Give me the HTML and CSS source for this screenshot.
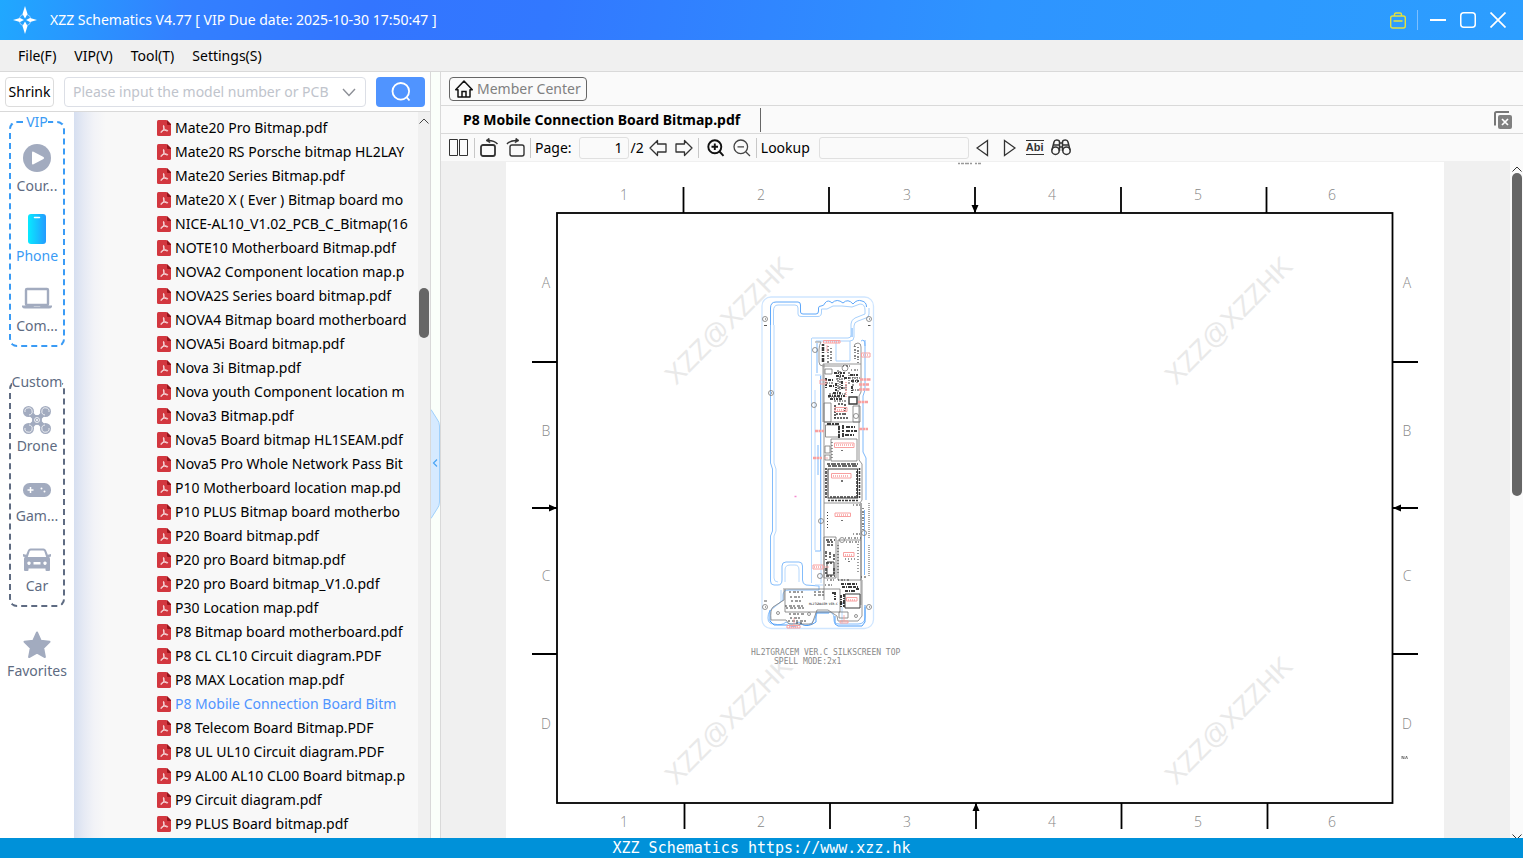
FILE: index.html
```html
<!DOCTYPE html>
<html lang="en">
<head>
<meta charset="utf-8">
<title>XZZ Schematics</title>
<link rel="stylesheet" href="styles.css">
</head>
<body>
<svg class="defs" aria-hidden="true">
  <symbol id="pdf" viewBox="0 0 14 16">
    <path d="M1.5 0H9.500L14 4.500V14.500Q14 16 12.500 16H1.500Q0 16 0 14.500V1.500Q0 0 1.500 0Z" fill="#d2373f"/>
    <path d="M10 0L14 4V5H11Q10 5 10 4Z" fill="#96141c"/>
    <path d="M6.500 5.500C7.600 5.500 6.900 8.500 6.200 10C5.600 11.300 4.400 12.800 3.800 12.300C3.300 11.500 6 10.300 8 10.100C9.500 9.900 11 10.200 10.700 10.900C10.200 11.600 8 10.300 7.300 8.900C6.700 7.700 6 5.700 6.500 5.500Z" fill="none" stroke="#fff" stroke-width="0.800"/>
  </symbol>
</svg>
<div class="app">
  <header class="titlebar">
    <svg class="logo" width="24" height="28" viewBox="0 0 24 28">
      <circle cx="12" cy="14" r="6" fill="none" stroke="#9fd0ff" stroke-width="1" stroke-dasharray="7 2.420" stroke-dashoffset="-1"/>
      <path d="M12 0L14.500 8L12 12.500L9.500 8ZM12 28L9.500 20L12 15.500L14.500 20ZM0 14L7 12L11 14L7 16ZM24 14L17 12L13 14L17 16Z" fill="#fff"/>
    </svg>
    <h1 class="title">XZZ Schematics V4.77 [ VIP Due date: 2025-10-30 17:50:47 ]</h1>
    <div class="window-buttons">
      <button aria-label="Toolbox"><svg width="16" height="17" viewBox="0 0 16 17" fill="none" stroke="#e4e23c" stroke-width="1.400"><rect x="0.700" y="4" width="14.600" height="12" rx="2"/><path d="M4.500 4V2.500Q4.500 1 6 1H10Q11.500 1 11.500 2.500V4M3.500 9H12.500"/></svg></button>
      <span class="divider"></span>
      <button aria-label="Minimize"><svg width="16" height="16" viewBox="0 0 16 16" stroke="#fff" stroke-width="2"><path d="M0 8H16"/></svg></button>
      <button aria-label="Maximize"><svg width="16" height="16" viewBox="0 0 16 16" fill="none" stroke="#fff" stroke-width="1.500"><rect x="0.750" y="0.750" width="14.500" height="14.500" rx="3"/></svg></button>
      <button aria-label="Close"><svg width="16" height="16" viewBox="0 0 16 16" stroke="#fff" stroke-width="1.700"><path d="M0.500 0.500L15.500 15.500M15.500 0.500L0.500 15.500"/></svg></button>
    </div>
  </header>
  <nav class="menubar">
    <button>File(F)</button><button>VIP(V)</button><button>Tool(T)</button><button>Settings(S)</button>
  </nav>
  <main class="workspace">
    <section class="browser">
      <form class="search">
        <button type="button" class="shrink">Shrink</button>
        <div class="combo">
          <input type="text" aria-label="Model number" placeholder="Please input the model number or PCB">
          <button type="button" aria-label="Show history"><svg width="14" height="9" viewBox="0 0 14 9" fill="none" stroke="#8c8f96" stroke-width="1.400"><path d="M1 1L7 7.500L13 1"/></svg></button>
        </div>
        <button type="button" class="go" aria-label="Search"><svg width="20" height="20" viewBox="0 0 20 20" fill="none" stroke="#fff" stroke-width="1.800"><circle cx="9.800" cy="9.300" r="8.300"/><path d="M15.500 15.200L18.500 18.500"/></svg></button>
      </form>
      <div class="browser-body">
        <nav class="categories">
          <fieldset class="group vip">
            <legend>VIP</legend>
            <div class="items">
              <button class="item"><svg width="28" height="28" viewBox="0 0 28 28"><circle cx="14" cy="14" r="14" fill="#a2abbf"/><path d="M9 8.500Q9 7 10.500 7.700L20.500 13Q21.800 14 20.500 15L10.500 20.300Q9 21 9 19.500Z" fill="#fff"/></svg><span>Cour...</span></button>
              <button class="item active"><svg width="28" height="30" viewBox="0 0 28 30"><defs><linearGradient id="phone-fill"><stop offset="0" stop-color="#08eaff"/><stop offset="1" stop-color="#249bff"/></linearGradient></defs><rect x="5" y="0" width="18" height="30" rx="3" fill="url(#phone-fill)"/><path d="M11.500 3.500H16.500" stroke="#fff" stroke-width="1.500" stroke-linecap="round"/></svg><span>Phone</span></button>
              <button class="item"><svg width="30" height="28" viewBox="0 0 30 28"><rect x="4" y="5" width="22" height="16" rx="1" fill="none" stroke="#a2abbf" stroke-width="2.400"/><path d="M0 21.500H11L12 22.500H18L19 21.500H30V23Q29 24.500 27 24.500H3Q1 24.500 0 23Z" fill="#a2abbf"/></svg><span>Com...</span></button>
            </div>
          </fieldset>
          <fieldset class="group custom">
            <legend>Custom</legend>
            <div class="items">
              <button class="item"><svg width="28" height="28" viewBox="0 0 28 28"><path d="M6 6L14 14L22 6M6 22L14 14L22 22" stroke="#a2abbf" stroke-width="5" fill="none"/><g fill="#a2abbf"><circle cx="5.500" cy="5.500" r="5.500"/><circle cx="22.500" cy="5.500" r="5.500"/><circle cx="5.500" cy="22.500" r="5.500"/><circle cx="22.500" cy="22.500" r="5.500"/><circle cx="14" cy="14" r="5"/></g><g fill="none" stroke="#fff" stroke-width="0.800"><path d="M2 6A3.600 3.600 0 1 1 6 9M26 6A3.600 3.600 0 1 0 22 9M2 22A3.600 3.600 0 1 0 6 19M26 22A3.600 3.600 0 1 1 22 19"/><circle cx="14" cy="14" r="2.500"/></g><circle cx="14" cy="14" r="1" fill="#fff"/></svg><span>Drone</span></button>
              <button class="item"><svg width="28" height="28" viewBox="0 0 28 28"><rect x="0" y="7" width="28" height="14" rx="6.500" fill="#a2abbf"/><path d="M4.500 14H10.500M7.500 11V17" stroke="#fff" stroke-width="1.500"/><circle cx="18.500" cy="12.500" r="1" fill="#fff"/><circle cx="21.500" cy="15.500" r="1" fill="#fff"/></svg><span>Gam...</span></button>
              <button class="item"><svg width="28" height="28" viewBox="0 0 28 28"><path fill-rule="evenodd" fill="#a2abbf" d="M7.500 2.500H20.500Q22.300 2.500 23 4.200L24.800 8.700L28 8V10.500L26.300 11Q27 12 27 13V24Q27 25 26 25H23.500Q22.500 25 22.500 24V22.500H5.500V24Q5.500 25 4.500 25H2Q1 25 1 24V13Q1 12 1.700 11L0 10.500V8L3.200 8.700L5 4.200Q5.700 2.500 7.500 2.500ZM8 4.500Q7 4.500 6.700 5.300L4.800 11H23.200L21.300 5.300Q21 4.500 20 4.500ZM6 15.500A1.700 1.700 0 1 0 6.010 15.500ZM22 15.500A1.700 1.700 0 1 0 22.010 15.500ZM10.500 16V18.500H17.500V16Z"/></svg><span>Car</span></button>
            </div>
          </fieldset>
          <button class="item favorites"><svg width="28" height="28" viewBox="0 0 28 28"><path d="M14 1.500L17.800 9.800L26.500 10.800L20.200 17L21.900 26L14 21.700L6.100 26L7.800 17L1.500 10.800L10.200 9.800Z" fill="#a2abbf" stroke="#a2abbf" stroke-width="2" stroke-linejoin="round"/></svg><span>Favorites</span></button>
        </nav>
        <ul class="files">
          <li><a href="#"><svg><use href="#pdf"/></svg>Mate20 Pro Bitmap.pdf</a></li>
          <li><a href="#"><svg><use href="#pdf"/></svg>Mate20 RS Porsche bitmap HL2LAY</a></li>
          <li><a href="#"><svg><use href="#pdf"/></svg>Mate20 Series Bitmap.pdf</a></li>
          <li><a href="#"><svg><use href="#pdf"/></svg>Mate20 X ( Ever ) Bitmap board mo</a></li>
          <li><a href="#"><svg><use href="#pdf"/></svg>NICE-AL10_V1.02_PCB_C_Bitmap(16</a></li>
          <li><a href="#"><svg><use href="#pdf"/></svg>NOTE10 Motherboard Bitmap.pdf</a></li>
          <li><a href="#"><svg><use href="#pdf"/></svg>NOVA2 Component location map.p</a></li>
          <li><a href="#"><svg><use href="#pdf"/></svg>NOVA2S Series board bitmap.pdf</a></li>
          <li><a href="#"><svg><use href="#pdf"/></svg>NOVA4 Bitmap board motherboard</a></li>
          <li><a href="#"><svg><use href="#pdf"/></svg>NOVA5i Board bitmap.pdf</a></li>
          <li><a href="#"><svg><use href="#pdf"/></svg>Nova 3i Bitmap.pdf</a></li>
          <li><a href="#"><svg><use href="#pdf"/></svg>Nova youth Component location m</a></li>
          <li><a href="#"><svg><use href="#pdf"/></svg>Nova3 Bitmap.pdf</a></li>
          <li><a href="#"><svg><use href="#pdf"/></svg>Nova5 Board bitmap HL1SEAM.pdf</a></li>
          <li><a href="#"><svg><use href="#pdf"/></svg>Nova5 Pro Whole Network Pass Bit</a></li>
          <li><a href="#"><svg><use href="#pdf"/></svg>P10 Motherboard location map.pd</a></li>
          <li><a href="#"><svg><use href="#pdf"/></svg>P10 PLUS Bitmap board motherbo</a></li>
          <li><a href="#"><svg><use href="#pdf"/></svg>P20 Board bitmap.pdf</a></li>
          <li><a href="#"><svg><use href="#pdf"/></svg>P20 pro Board bitmap.pdf</a></li>
          <li><a href="#"><svg><use href="#pdf"/></svg>P20 pro Board bitmap_V1.0.pdf</a></li>
          <li><a href="#"><svg><use href="#pdf"/></svg>P30 Location map.pdf</a></li>
          <li><a href="#"><svg><use href="#pdf"/></svg>P8 Bitmap board motherboard.pdf</a></li>
          <li><a href="#"><svg><use href="#pdf"/></svg>P8 CL CL10 Circuit diagram.PDF</a></li>
          <li><a href="#"><svg><use href="#pdf"/></svg>P8 MAX Location map.pdf</a></li>
          <li><a href="#" class="current"><svg><use href="#pdf"/></svg>P8 Mobile Connection Board Bitm</a></li>
          <li><a href="#"><svg><use href="#pdf"/></svg>P8 Telecom Board Bitmap.PDF</a></li>
          <li><a href="#"><svg><use href="#pdf"/></svg>P8 UL UL10 Circuit diagram.PDF</a></li>
          <li><a href="#"><svg><use href="#pdf"/></svg>P9 AL00 AL10 CL00 Board bitmap.p</a></li>
          <li><a href="#"><svg><use href="#pdf"/></svg>P9 Circuit diagram.pdf</a></li>
          <li><a href="#"><svg><use href="#pdf"/></svg>P9 PLUS Board bitmap.pdf</a></li>
        </ul>
        <div class="scroll list-scroll">
          <svg width="10" height="6" viewBox="0 0 10 6" fill="none" stroke="#444"><path d="M0.500 5.500L5 1L9.500 5.500"/></svg>
          <span class="thumb"></span>
        </div>
      </div>
    </section>
    <div class="splitter">
      <button aria-label="Collapse panel"><svg width="9" height="110" viewBox="0 0 9 110"><path d="M0 0.500L6 10Q8.500 13 8.500 17V93Q8.500 97 6 100L0 109.500" fill="#d6eaff" stroke="#9fd0fb"/><path d="M6 50.500L2.500 54L6 57.500" fill="none" stroke="#4aa5f5" stroke-width="1.200"/></svg></button>
    </div>
    <section class="document">
      <div class="memberbar">
        <button class="member"><svg width="18" height="18" viewBox="0 0 18 18" fill="none" stroke="#111" stroke-width="1.500"><path d="M0.700 9.700L9 1L17.300 9.700H15V17H3V9.700Z" stroke-linejoin="round"/><path d="M7 17V11.500H11V17"/></svg>Member Center</button>
      </div>
      <div class="tabs">
        <button class="tab">P8 Mobile Connection Board Bitmap.pdf</button>
        <button class="close-all" aria-label="Close all tabs"><svg width="18" height="18" viewBox="0 0 18 18"><path d="M1 14.500V2.500Q1 1 2.500 1H15" fill="none" stroke="#777" stroke-width="2"/><rect x="4" y="4" width="14" height="14" rx="2" fill="#808080"/><path d="M8 8L14 14M14 8L8 14" stroke="#fff" stroke-width="1.700"/></svg></button>
      </div>
      <div class="toolbar">
        <button aria-label="Two pages"><svg width="20" height="18" viewBox="0 0 20 18" fill="none" stroke="#333"><path d="M0.500 0.500H8.500V16.500H0.500ZM10.500 0.500H18.500V16.500H10.500Z"/></svg></button>
        <span class="sep"></span>
        <button aria-label="Rotate left"><svg width="19" height="19" viewBox="0 0 19 19" fill="none" stroke="#333"><rect x="1" y="7" width="14" height="11" rx="2" stroke-width="1.800"/><path d="M17.500 6Q14 2 6.500 2.500" stroke-width="1.500"/><path d="M9 0L6 2.500L10 5Z" fill="#333" stroke-width="0.500"/></svg></button>
        <button class="rotate-right" aria-label="Rotate right"><svg width="19" height="19" viewBox="0 0 19 19" fill="none" stroke="#333"><rect x="4" y="7" width="14" height="11" rx="2" stroke-width="1.400"/><path d="M1 6Q4.500 2 12.500 2.500" stroke-width="1.500"/><path d="M10 0L13 2.500L9 5Z" fill="#333" stroke-width="0.500"/></svg></button>
        <span class="sep"></span>
        <label for="page">Page:</label>
        <input id="page" class="page-input" type="text" value="1">
        <span class="total">/2</span>
        <button class="prev-page" aria-label="Previous page"><svg width="18" height="18" viewBox="0 0 18 18" fill="none" stroke="#333" stroke-width="1.300"><path d="M1 9L8.500 1.500V5H17V13H8.500V16.500Z" stroke-linejoin="round"/></svg></button>
        <button class="next-page" aria-label="Next page"><svg width="18" height="18" viewBox="0 0 18 18" fill="none" stroke="#333" stroke-width="1.300"><path d="M17 9L9.500 1.500V5H1V13H9.500V16.500Z" stroke-linejoin="round"/></svg></button>
        <span class="sep"></span>
        <button class="zoom-in" aria-label="Zoom in"><svg width="18" height="18" viewBox="0 0 18 18" fill="none" stroke="#111" stroke-width="1.900"><circle cx="7.800" cy="7.800" r="6.500"/><path d="M12.500 12.500L16.500 16.800M4.500 7.800H11M7.800 4.500V11"/></svg></button>
        <button class="zoom-out" aria-label="Zoom out"><svg width="18" height="18" viewBox="0 0 18 18" fill="none" stroke="#444" stroke-width="1.300"><circle cx="7.800" cy="7.800" r="6.800"/><path d="M12.700 12.700L17 17M4.500 7.800H11"/></svg></button>
        <span class="sep"></span>
        <label for="lookup">Lookup</label>
        <input id="lookup" class="lookup-input" type="text">
        <button class="find-prev" aria-label="Find previous"><svg width="13" height="18" viewBox="0 0 13 18" fill="none" stroke="#333" stroke-width="1.300"><path d="M1 9L11.500 1.500V16.500Z"/></svg></button>
        <button class="find-next" aria-label="Find next"><svg width="13" height="18" viewBox="0 0 13 18" fill="none" stroke="#333" stroke-width="1.300"><path d="M12 9L1.500 1.500V16.500Z"/></svg></button>
        <button class="case" aria-label="Match case">Abi</button>
        <button class="binoculars" aria-label="Find in document"><svg width="20" height="17" viewBox="0 0 20 17" fill="none" stroke="#333" stroke-width="1.500"><circle cx="4.500" cy="11.700" r="3.700"/><circle cx="15.500" cy="11.700" r="3.700"/><path d="M1 11L3 3Q3.500 1 5.500 1Q8.500 1 8.500 3V12M19 11L17 3Q16.500 1 14.500 1Q11.500 1 11.500 3V12M8.500 4H11.500M8.500 8H11.500M2.500 6H8.500M11.500 6H17.500"/></svg></button>
      </div>
      <div class="viewer">
        <div class="sheet">
          <svg class="drawing" viewBox="506 162 938 676" preserveAspectRatio="xMidYMin slice" fill="none">
            <g class="watermark" text-anchor="middle">
              <text transform="translate(735 327) rotate(-45)">XZZ@XZZHK</text>
              <text transform="translate(1235 327) rotate(-45)">XZZ@XZZHK</text>
              <text transform="translate(735 727) rotate(-45)">XZZ@XZZHK</text>
              <text transform="translate(1235 727) rotate(-45)">XZZ@XZZHK</text>
            </g>
            <g stroke="#000" stroke-width="1.800">
              <rect x="557" y="213" width="835.500" height="590"/>
              <path d="M683.500 187V213M829 187V213M975 187V213M1121 187V213M1266.500 187V213M684.500 803V829M830 803V829M976 803V829M1121.500 803V829M1267.500 803V829"/>
              <path d="M532 362H557M532 508H557M532 654H557M1392 362H1418M1392 508H1418M1392 654H1418"/>
            </g>
            <path fill="#000" d="M971.500 205H978.500L975 213ZM972.500 811H979.500L976 803ZM549 504.500V511.500L557 508ZM1401 504.500V511.500L1393 508Z"/>
            <g class="zones" text-anchor="middle">
              <text x="624" y="200">1</text><text x="761" y="200">2</text><text x="907" y="200">3</text><text x="1052" y="200">4</text><text x="1198" y="200">5</text><text x="1332" y="200">6</text>
              <text x="624" y="827">1</text><text x="761" y="827">2</text><text x="907" y="827">3</text><text x="1052" y="827">4</text><text x="1198" y="827">5</text><text x="1332" y="827">6</text>
              <text x="546" y="288">A</text><text x="546" y="436">B</text><text x="546" y="581">C</text><text x="546" y="729">D</text>
              <text x="1407" y="288">A</text><text x="1407" y="436">B</text><text x="1407" y="581">C</text><text x="1407" y="729">D</text>
            </g>
            <path d="M958 163.500H981" stroke="#999" stroke-width="1.500" stroke-dasharray="2 1 3 1 4 1 2 3"/>
            <path d="M1402 759V756L1404 759V756M1405.500 759L1406.500 756L1407.500 759" stroke="#555" stroke-width="0.700"/>
            <!-- enclosure -->
            <rect x="762" y="297" width="111.500" height="331.500" rx="9" stroke="#d0e6ff" stroke-width="1.300"/>
            <path stroke="#5fa8fa" d="M770.500 325V308Q770.500 302 776 302H798Q800.500 302 800.500 305V312Q800.500 314 803 314H816Q818.500 314 818.500 311V308Q818.500 306 821 306Q824 306 825 303Q828 299 832 303Q837 298 843 303Q848 298 853 304Q857 299 862 301Q866.500 302 866.500 307M852 328V337"/>
            <path stroke="#a9d1fc" d="M773.500 325V311Q773.500 305 778 305H795Q798 305 798 308V314Q798 316.500 801 316.500H818Q821.500 316.500 821.500 312V309H827L833 306H842L852 307L860 304Q865 304 865 310V314L855 318Q851 320 851 324V335Q851 338 848 338H812M869 308V314Q869 317 866 318L858 321Q854 322 854 326V337Q854 341 850 341H816"/>
            <path stroke="#83bcfb" d="M770.500 325V463L772.500 469V531L770.500 536V581Q770.500 585 774 585H778Q782 585 782 580V566Q782 562 786 562H799Q802.500 562 802.500 566V580Q802.500 584 806 585L819 586V590H789Q783 590 783 595V600L773 608Q768 611 768 618Q768 624 774 624Q782 626 786 622Q791 626 799 622Q805 628 812 623Q817 616 817 612H828Q834 612 834 618V620Q834 624 839 624H858Q865 624 865 617V607"/>
            <path stroke="#b6d8fd" d="M774 325V463L776 469V531L774 536V578Q774 582 778 582M785 582V570Q785 565 790 565H795Q799 565 799 570V582M811.500 338V583M815 390V550M821 375V583M815 375H821M781 590V602L771 610M815 585H823M842 607V624"/>
            <path stroke="#6eb0fa" d="M820.500 376V551H815M818 445V475M865 340V390L863 396V452L866 458V500M864.500 510V575M861 341Q865 338 865 346M817 343V373" stroke-width="0.900"/>
            <path stroke="#a9d1fc" d="M836 341V361H850V341"/>
            <path stroke="#4d9df8" d="M770 610V621L774 625H787Q795 628 801 624Q808 628 816 622V613H829M835 616V624L838 626H862L865 622V605"/>
            <path stroke="#8a8a8a" stroke-width="0.900" d="M815 342H821Q819 345 819 350V362Q819 366 823 366H842M854 347Q854 343 858 343Q861 343 861 347V364H823V422M861 364V392L859 396V460L862 464V500L860 503H824M824 364V600M861 503V605M824 422H860M784 588V600L773 607Q770 610 771 620H786L789 624H812L817 610H828L837 616L838 621H858L862 616V580"/>
            <!-- part outlines -->
            <g stroke="#777" stroke-width="0.800">
              <path d="M825.500 425H839V437H825.500ZM831 439H857V461H831ZM825 446H830V453H825ZM825 455H830V460H825ZM824 403H831V422H824ZM853 406H860V422H853ZM824 537H836V578H824ZM861 503V540M838 540H861V580H838ZM785 589H840V612H785ZM839 612H848V618H839ZM825 369H832V374H825Z"/>
              <circle cx="765" cy="319" r="2.500"/><circle cx="869" cy="319" r="2.500"/><circle cx="771" cy="393" r="2.500"/><circle cx="814" cy="405" r="2.500"/><circle cx="815" cy="350" r="2.500"/><circle cx="821" cy="521" r="2.500"/><circle cx="864" cy="533" r="2.500"/><circle cx="820" cy="576" r="2.500"/><circle cx="765" cy="607" r="2.500"/><circle cx="869" cy="607" r="2.500"/><circle cx="845" cy="368" r="3"/><circle cx="856" cy="416" r="2.500"/><circle cx="842" cy="540" r="2.500"/><circle cx="778" cy="613" r="1.500"/><circle cx="809" cy="614" r="1.500"/><circle cx="856" cy="616" r="1.500"/>
            </g>
            <path d="M764 325.500H767M868 325.500H870.500M764 601H767M765 319H766M869 319H870M771 393H772M765 607H766M869 607H870" stroke="#555"/>
            <!-- dense component clusters -->
            <g stroke="#3a3a3a">
              <path stroke-width="2.500" stroke-dasharray="2 1 4 1 1 2" d="M823 344V363"/>
              <path stroke-width="1.200" stroke-dasharray="1 2 2 1" d="M855 346V361M828 346V364M831 348V362M858 347V363M843 366H850M851 370H860"/>
              <path stroke-width="2" stroke-dasharray="3 1 1 1 2 1" d="M826 378V388M828 380H834M829 386H835M834 373H845M836 376H844M836 383V392M842 381V390M844 378H850M850 375H859M851 381H859M852 386V393M828 396H845M830 399H843M833 393H841"/>
              <path stroke-width="1" stroke-dasharray="2 1 1 1" d="M826 383H834M836 379H846M838 388H846M846 384V391M849 378H860M849 372V384M852 390H859M829 394H846M834 401H846M828 397H842M838 370V392M840 371V391M853 374V386M857 374V384"/>
              <path stroke-width="1.400" d="M849 397H857V404H849Z"/><path stroke-width="1.600" stroke-dasharray="2 1" d="M835 405V418M845 404V416M834 418H848M838 404H844M836 414H844"/>
              <path stroke-width="2" stroke-dasharray="4 1 2 1" d="M827 424H839M839 426V438M843 425V437M846 427H855M846 431H857M845 435H854"/>
              <path stroke-width="1.500" stroke-dasharray="3 1 5 1" d="M827 464H858M828 466H858"/>
              <rect x="828" y="469" width="29.500" height="29" stroke-width="1"/>
              <path stroke-width="1.600" stroke-dasharray="2 1 3 1" d="M826 468V499M859.500 468V499M828 500.500H858M830 497H857M857 471V496"/>
              <path stroke-width="1.500" stroke-dasharray="3 1 2 2" d="M826 540H835M827 542H835M827 545H834M826 551V560M830 552V558M834 554V560M826 563H834M826 568V576M834 568V576M826 576H835"/>
              <path d="M827 562H834V575H827Z"/>
              <path stroke-width="1.200" stroke-dasharray="1 2 2 1" d="M853 505H862M853 534H861M845 538H861M846 542H861M838 580H850M827 580H834M825 585H834M863 508V530M861 577H866"/>
              <path stroke-width="2" stroke-dasharray="3 1 1 1 4 1" d="M841 584H858M842 587H858M845 591H855M841 595V607M844 594V607M856 589H860M835 592V600M832 593H836"/>
              <path stroke-width="1" d="M845 594H860V608H845Z"/>
              <path stroke-width="1" stroke-dasharray="2 2 3 1" d="M789 592H803M790 597H803M791 601H802M785 606H805M786 608H804M789 614H805M790 618H800M788 621H808M796 623H802M814 592H826M814 595H824"/>
              <path stroke-width="1" stroke-dasharray="1 2" d="M827.500 512V530M838 545V575M858 544V574M845 559H857M832 442V460"/>
            </g>
            <path stroke="#aaa" stroke-width="2" stroke-dasharray="1 1" d="M869 503V538M869 545V576"/>
            <text class="board-name" x="809" y="605">HL2TGRACEM VER.C VF</text>
            <!-- part labels -->
            <g stroke="#f8a0a0">
              <path d="M823.500 340.500H840V343H823.500ZM861.500 353H870V357H861.500ZM820 380H826V384H820ZM835 407.500H847V411.500H835ZM834.500 443H854V447.500H834.500ZM831.500 473.500H851V478H831.500ZM835 513H850.500V516.500H835ZM843.500 552.500H854V556.500H843.500ZM846.500 597.500H857V601H846.500ZM813 565H823V569H813ZM787 625.500H800V628H787ZM840 621H848V623H840Z"/>
              <path stroke-width="2.500" stroke-dasharray="3 0.500" d="M860 379.500H871M859 384.500H869M859 389.500H870M858 402H868M859 429H868M815 431H824M813 458H822"/>
              <path stroke-width="1.500" stroke-dasharray="1 1" d="M826 342H839M863 355H869M837 410H846M836 445H853M833 476H849M837 515H849M845 555H853M848 600H856M814 567H822M789 627H799M846 382V397"/>
              <path d="M822 567H829M794 618V625M844 615V621M827 345V352M824 458H828" stroke-width="0.800"/>
            </g>
            <path d="M794.500 496.500H796.500" stroke="#f58cd0" stroke-width="1.500"/>
            <path d="M842 450V451M841 481H843M842 520V521M849 561V562" stroke="#444" stroke-width="1.500"/>
            <g class="caption"><text x="751" y="655">HL2TGRACEM VER.C SILKSCREEN TOP</text><text x="774" y="664">SPELL MODE:2x1</text></g>
          </svg>
        </div>
        <div class="scroll page-scroll">
          <svg width="10" height="6" viewBox="0 0 10 6" fill="none" stroke="#333"><path d="M0.500 5.500L5 1L9.500 5.500"/></svg>
          <span class="thumb"></span>
          <svg class="down" width="10" height="4" viewBox="0 0 10 4" fill="none" stroke="#333"><path d="M0.500 0.500L5 5L9.500 0.500"/></svg>
        </div>
      </div>
    </section>
  </main>
  <footer class="statusbar">XZZ Schematics https://www.xzz.hk</footer>
</div>
</body>
</html>
```
FILE: styles.css
```css
* { box-sizing: border-box; }
body { margin: 0; font: 14px/20px "Noto Sans", "Open Sans", sans-serif; color: #000; }
button, input { font: inherit; color: inherit; }
button { border: 0; padding: 0; background: none; }
svg { display: block; flex: none; }
.defs { position: absolute; width: 0; height: 0; }
.app { display: flex; flex-direction: column; height: 100vh; overflow: hidden; }

.titlebar { flex: none; display: flex; align-items: center; height: 40px; padding: 0 17px 0 13px; color: #fff; background: linear-gradient(100deg, #20a8ff 0, #3380ff 12%, #3375ff 24%, #3278ff 36%, #2e94ff 65%, #2c9eff 100%); }
.title { flex: 1; margin: 0 0 0 13px; font-size: 14px; font-weight: 400; }
.window-buttons { display: flex; align-items: center; gap: 14px; }
.window-buttons .divider { width: 1px; height: 20px; margin: 0 -2px 0 -3px; background: #7dbfff; }

.menubar { flex: none; display: flex; align-items: center; gap: 18px; height: 32px; padding: 1px 18px 0; background: #f0f0f0; border-bottom: 1px solid #d9d9d9; }

.workspace { flex: 1; min-height: 0; display: flex; }
.browser { flex: none; display: flex; flex-direction: column; width: 431px; border-right: 1px solid #d9d9d9; }
.search { flex: none; display: flex; align-items: center; height: 40px; padding: 1px 5px 0; border-bottom: 1px solid #d9d9d9; background: #fff; }
.shrink { width: 49px; height: 30px; border: 1px solid #dcdcdc; border-radius: 4px; background: #fff; }
.combo { flex: 1; display: flex; align-items: center; height: 30px; margin: 0 10px; padding: 0 9px 0 8px; border: 1px solid #dcdfe6; border-radius: 4px; }
.combo input { flex: 1; min-width: 0; padding: 0; border: 0; outline: 0; background: none; }
.combo input::placeholder { color: #c0c4cc; }
.go { display: grid; place-items: center; width: 49px; height: 30px; border-radius: 4px; background: #5094ff; }
.browser-body { flex: 1; min-height: 0; display: flex; }

.categories { flex: none; width: 74px; background: #fff; color: #5e6b82; text-align: center; }
.group { min-width: 0; width: 56px; margin: 0 auto; padding: 5px 0 0; border: 2px dashed; border-radius: 8px; }
.group legend { margin: 0 auto; padding: 0; }
.vip { border-color: #3a9bf5; }
.vip legend, .item.active { color: #3a9bf5; }
.custom { margin-top: 25px; border-color: #5e6b82; }
.items { display: flex; flex-direction: column; gap: 2px; }
.item { display: flex; flex-direction: column; align-items: center; justify-content: space-between; width: 100%; height: 68px; padding: 7px 0 9px; }
.custom .item, .favorites { padding-top: 9px; }
.favorites { margin-top: 15px; }

.files { flex: 1; min-width: 0; margin: 0; padding: 4px 12px 0 83px; list-style: none; overflow: hidden; background: linear-gradient(90deg, #d6dff0 0, #e6eaf4 10px, #f2f3f7 20px, #f8f8f8 32px); }
.files a { display: flex; align-items: center; gap: 4px; height: 24px; white-space: nowrap; color: #000; text-decoration: none; }
.files a.current { color: #5094ff; }
.files svg { width: 14px; height: 16px; }
.scroll { flex: none; display: flex; flex-direction: column; align-items: center; }
.scroll .thumb { width: 10px; border-radius: 5px; background: #666; }
.list-scroll { width: 12px; padding-top: 6px; background: #f0f0f0; }
.list-scroll .thumb { height: 7%; margin-top: 164px; }

.splitter { flex: none; display: flex; align-items: center; width: 10px; background: #fafffa; border-right: 1px solid #d9d9d9; }
.splitter button { margin-top: 18px; }

.document { flex: 1; min-width: 0; display: flex; flex-direction: column; background: #fafafa; }
.memberbar { flex: none; display: flex; align-items: center; height: 34px; padding: 0 8px; border-bottom: 1px solid #d9d9d9; }
.member { display: flex; align-items: center; gap: 4px; height: 24px; padding: 0 5px; border: 1px solid #666; border-radius: 4px; color: #808080; }
.tabs { flex: none; display: flex; align-items: center; justify-content: space-between; height: 28px; padding: 0 11px 0 6px; border-bottom: 1px solid #d9d9d9; }
.tab { height: 24px; padding: 0 20px 0 16px; border-right: 1px solid #666; font-weight: 700; }
.toolbar { flex: none; display: flex; align-items: center; height: 27px; padding: 0 8px; }
.sep { width: 1px; height: 20px; margin: 0 5px; background: #c8c8c8; }
.rotate-right { margin-left: 7px; }
.toolbar label { margin-right: 7px; }
.toolbar .sep + label { margin-left: -1px; }
.toolbar input { height: 22px; padding: 0 5px; border: 1px solid #e0e0e0; border-radius: 3px; background: #fafafa; }
.page-input { width: 50px; text-align: right; }
.total { margin: 0 5px 0 2px; }
.next-page { margin-left: 8px; }
.zoom-in { margin-left: 3px; }
.zoom-out { margin-left: 8px; }
.toolbar .lookup-input { width: 150px; margin-left: 2px; }
.find-prev { margin-left: 7px; }
.find-next { margin-left: 14px; }
.case { margin: 0 7px 0 10px; border: solid #333; border-width: 1px 0; font: 700 11px/13px "Liberation Sans", sans-serif; color: #333; }

.viewer { flex: 1; min-height: 0; display: flex; background: #f0f0f0; }
.sheet { flex: 1; min-width: 0; margin: 1px 66px 0 65px; background: #fff; }
.drawing { width: 100%; height: 100%; }
.page-scroll { width: 13px; padding: 5px 0 0; background: #fafafa; }
.page-scroll .thumb { height: 48%; margin-top: 1px; }
.page-scroll .down { margin-top: auto; }
.watermark { font: 27px "Liberation Sans", sans-serif; fill: #e9e9e9; }
.zones { font: 300 14px "Open Sans", "Noto Sans", sans-serif; fill: #888; }
.caption { font: 8px "DejaVu Sans Mono", monospace; fill: #888; }
.board-name { font: 3px "DejaVu Sans Mono", monospace; fill: #000; }

.statusbar { flex: none; height: 20px; background: #0091d9; color: #fff; text-align: center; font: 15px/20px "DejaVu Sans Mono", monospace; }
```
